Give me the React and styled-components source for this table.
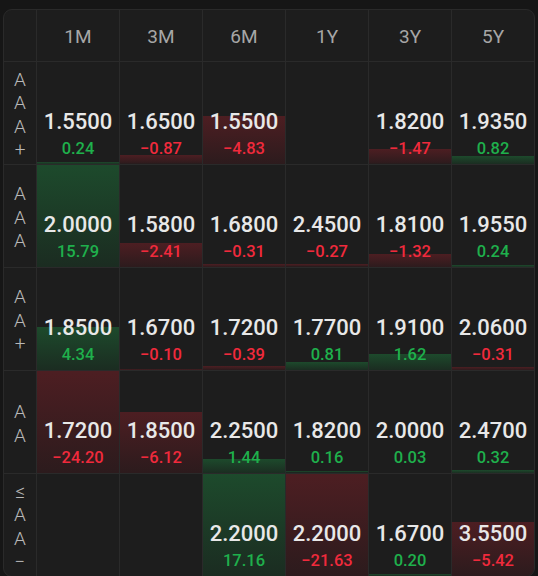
import React from 'react'
import styled, { createGlobalStyle } from 'styled-components'

const GlobalStyle = createGlobalStyle`
	body {
		margin: 0;
		background: #161616;
		font-family: Roboto, "Noto Sans", sans-serif;
	}
`

const periods = ['1M', '3M', '6M', '1Y', '3Y', '5Y']

const rows = [
	{ label: ['A', 'A', 'A', '+'], cells: [[1.55, 0.24], [1.65, -0.87], [1.55, -4.83], null, [1.82, -1.47], [1.935, 0.82]] },
	{ label: ['A', 'A', 'A'], cells: [[2.0, 15.79], [1.58, -2.41], [1.68, -0.31], [2.45, -0.27], [1.81, -1.32], [1.955, 0.24]] },
	{ label: ['A', 'A', '+'], cells: [[1.85, 4.34], [1.67, -0.1], [1.72, -0.39], [1.77, 0.81], [1.91, 1.62], [2.06, -0.31]] },
	{ label: ['A', 'A'], cells: [[1.72, -24.2], [1.85, -6.12], [2.25, 1.44], [1.82, 0.16], [2.0, 0.03], [2.47, 0.32]] },
	{ label: ['≤', 'A', 'A', '−'], cells: [null, null, [2.2, 17.16], [2.2, -21.63], [1.67, 0.2], [3.55, -5.42]] },
]

const fmtChange = (v) => (v < 0 ? '−' + Math.abs(v).toFixed(2) : v.toFixed(2))

const barFill = {
	up: 'linear-gradient(to bottom, #1d4a2c, #1b2c21)',
	down: 'linear-gradient(to bottom, #4d1e22, #2c1b1d)',
}

export default function App() {
	return (
		<Page>
			<GlobalStyle />
			<Table>
				<HeadCell />
				{periods.map((p) => (
					<HeadCell key={p}>{p}</HeadCell>
				))}

				{rows.map((row, i) => (
					<React.Fragment key={i}>
						<LabelCell>
							{row.label.map((ch, j) => (
								<span key={j}>{ch}</span>
							))}
						</LabelCell>
						{row.cells.map((cell, j) => {
							if (!cell) return <Cell key={j} />
							const [value, change] = cell
							const dir = change >= 0 ? 'up' : 'down'
							// bar grows 10px per percent, capped at the cell height
							const h = Math.min(Math.abs(change) * 10, 102)
							return (
								<Cell key={j} $dir={dir} style={{ backgroundSize: `100% ${h}px` }}>
									<Value>{value.toFixed(4)}</Value>
									<Change $dir={dir}>{fmtChange(change)}</Change>
								</Cell>
							)
						})}
					</React.Fragment>
				))}
			</Table>
		</Page>
	)
}

const Page = styled.div`
	padding: 9px 3px 0 3px;
	height: 576px;
	box-sizing: border-box;
	overflow: hidden;
`

const Table = styled.div`
	display: grid;
	width: 532px;
	box-sizing: border-box;
	grid-template-columns: 32px repeat(6, 82px);
	grid-template-rows: 51px repeat(5, 102px);
	gap: 1px;
	background: #2a2a2a;
	border: 1px solid #2a2a2a;
	border-radius: 9px;
	overflow: hidden;
`

const HeadCell = styled.div`
	background: #1d1d1d;
	display: flex;
	align-items: center;
	justify-content: center;
	color: #a6a6a6;
	font-size: 19px;
	padding-top: 1px;
`

const LabelCell = styled.div`
	background: #1d1d1d;
	display: flex;
	flex-direction: column;
	align-items: center;
	justify-content: center;
	padding-top: 3px;
	color: #b8b8b8;
	font-size: 19px;
	font-weight: 300;
	span {
		line-height: 23.5px;
	}
`

const Cell = styled.div`
	background-color: #1d1d1d;
	background-image: ${(p) => (p.$dir ? barFill[p.$dir] : 'none')};
	background-repeat: no-repeat;
	background-position: bottom;
	display: flex;
	flex-direction: column;
	align-items: center;
	justify-content: flex-end;
	gap: 4px;
	padding-bottom: 5px;
	box-sizing: border-box;
`

const Value = styled.div`
	color: #e8e8e8;
	font-size: 22px;
	font-weight: 500;
	line-height: 27px;
`

const Change = styled.div`
	color: ${(p) => (p.$dir === 'up' ? '#1fb04c' : '#f02a3c')};
	font-size: 16.5px;
	font-weight: 500;
	line-height: 20px;
`
